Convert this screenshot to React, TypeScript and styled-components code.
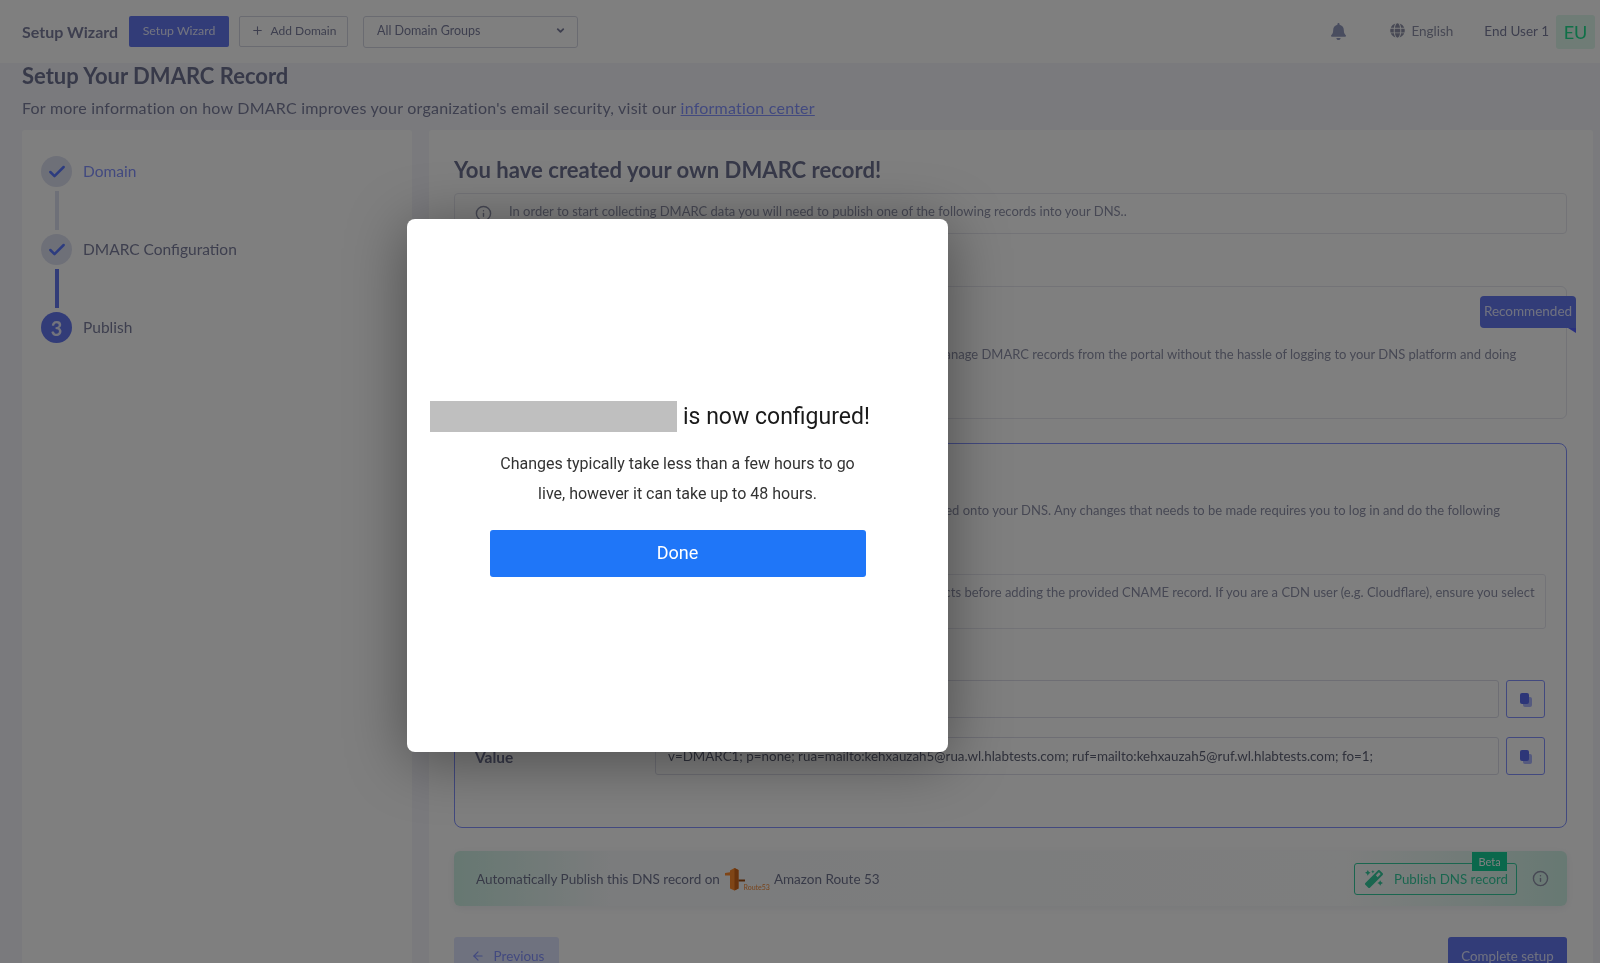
import React from "react";
import styled, { createGlobalStyle } from "styled-components";
import { Check, Info, Plus, ArrowLeft, ChevronDown } from "lucide-react";
import { FaBell, FaGlobe, FaMagic } from "react-icons/fa";

const Global = createGlobalStyle`
  html, body { margin: 0; padding: 0; background: #f4f6fc; }
  * { box-sizing: border-box; }
`;
const INK = "#7c7f9e";
const MUTED = "#8e91a8";
const BRAND = "#8493ff";
const DARK = "#6478f0";
const GREEN = "#35cc9f";

const Page = styled.div`
  position: relative;
  width: 1600px;
  height: 963px;
  overflow: hidden;
  background: #f4f5fa;
  font-family: "Lato", "Liberation Sans", sans-serif;
  color: ${INK};
  filter: blur(0.35px);
`;
const TopBar = styled.header`
  height: 63px;
  background: #fff;
  display: flex;
  align-items: center;
  padding: 0 5px 0 22px;
`;
const Brand = styled.div`
  font-size: 16px;
  font-weight: 700;
  width: 107px;
`;
const PrimaryBtn = styled.div`
  width: 100px;
  height: 31px;
  padding-bottom: 2px;
  border-radius: 2px;
  background: ${DARK};
  color: #e6e9ff;
  font-size: 12.3px;
  display: flex;
  align-items: center;
  justify-content: center;
`;
const OutlineBtn = styled.div`
  margin-left: 10px;
  width: 109px;
  height: 31px;
  padding-bottom: 2px;
  border: 1px solid #d5d7e2;
  border-radius: 2px;
  font-size: 12px;
  display: flex;
  align-items: center;
  justify-content: center;
  gap: 7px;
`;
const SelectBox = styled.div`
  margin-left: 15px;
  width: 215px;
  height: 32px;
  padding: 0 11px 2px 13px;
  border: 1px solid #d5d7e2;
  border-radius: 3px;
  font-size: 12.5px;
  display: flex;
  align-items: center;
  justify-content: space-between;
`;
const Spacer = styled.div`
  flex: 1;
`;
const BellWrap = styled.div`
  color: #939abf;
  display: flex;
  margin-right: 43px;
`;
const Lang = styled.div`
  display: flex;
  align-items: center;
  gap: 6px;
  font-size: 13.5px;
  padding-bottom: 2px;
  color: ${MUTED};
  margin-right: 31px;
`;
const UserName = styled.div`
  font-size: 13.5px;
  padding-bottom: 2px;
  margin-right: 7px;
`;
const Avatar = styled.div`
  width: 39px;
  height: 34px;
  border-radius: 3px;
  background: #def8ec;
  color: #20e090;
  font-size: 18px;
  display: flex;
  align-items: center;
  justify-content: center;
`;
const Main = styled.main`
  padding: 0 7px 0 22px;
`;
const PageTitle = styled.h1`
  margin: 0;
  height: 27px;
  line-height: 25px;
  font-size: 22px;
  font-weight: 700;
  color: #6f7392;
`;
const PageSub = styled.p`
  margin: 6px 0 0;
  height: 24px;
  line-height: 24px;
  font-size: 16px;
  letter-spacing: 0.22px;
`;
const InfoLink = styled.a`
  color: ${BRAND};
  text-decoration: underline;
`;
const Columns = styled.div`
  margin-top: 10px;
  display: grid;
  grid-template-columns: 390px 1164px;
  gap: 17px;
`;
const SidePanel = styled.aside`
  background: #fff;
  height: 840px;
  border-radius: 3px;
  padding: 26px 19px;
`;
const Step = styled.div`
  display: flex;
  align-items: center;
  gap: 11px;
`;
const StepDot = styled.div<{ $solid?: boolean }>`
  width: 31px;
  height: 31px;
  border-radius: 50%;
  background: ${(p) => (p.$solid ? DARK : "#dde0f0")};
  color: ${(p) => (p.$solid ? "#e6e8fa" : "#5a78ff")};
  font-size: 20px;
  font-weight: 700;
  display: flex;
  align-items: center;
  justify-content: center;
`;
const StepLabel = styled.div<{ $active?: boolean }>`
  font-size: 15.5px;
  padding-bottom: 2px;
  color: ${(p) => (p.$active ? BRAND : INK)};
`;
const Connector = styled.div<{ $done?: boolean }>`
  width: 4px;
  height: 39px;
  margin: 4px 0 4px 14px;
  background: ${(p) => (p.$done ? DARK : "#dde0f0")};
`;
const Content = styled.section`
  background: #fff;
  height: 840px;
  border-radius: 3px;
  padding: 25px 26px 0 25px;
`;
const ContentTitle = styled.h2`
  margin: 0;
  height: 30px;
  line-height: 30px;
  font-size: 22.1px;
  font-weight: 700;
  color: #6f7392;
`;
const Notice = styled.div`
  margin-top: 8px;
  height: 41px;
  border: 1px solid #e6e7ef;
  border-radius: 4px;
  padding: 9px 20px;
  display: flex;
  gap: 9px;
  font-size: 13px;
  color: ${MUTED};
`;
const NoticeIcon = styled.div`
  display: flex;
  margin-top: 2px;
  width: 25px;
  flex: none;
`;
const Card = styled.div`
  position: relative;
  margin-top: 52px;
  height: 133px;
  border: 1px solid #e6e7ef;
  border-radius: 6px;
  padding: 57px 20px 0;
  font-size: 13px;
  line-height: 20px;
  color: ${MUTED};
`;
const Ribbon = styled.div`
  position: absolute;
  top: 9px;
  right: -10px;
  width: 96px;
  height: 32px;
  padding-bottom: 2px;
  border-radius: 4px 4px 0 4px;
  background: ${DARK};
  color: #dfe3ff;
  font-size: 13.5px;
  display: flex;
  align-items: center;
  justify-content: center;
  &::after {
    content: "";
    position: absolute;
    right: 0;
    top: 32px;
    border-top: 5px solid #5560ff;
    border-right: 8px solid transparent;
    transform: scaleX(-1);
  }
`;
const SelectedCard = styled.div`
  margin-top: 24px;
  height: 385px;
  border: 1px solid ${BRAND};
  border-radius: 8px;
  padding: 56px 20px 0;
  font-size: 13px;
  line-height: 20px;
  color: ${MUTED};
`;
const NoteBox = styled.div`
  margin-top: 34px;
  height: 55px;
  border: 1px solid #e6e7ef;
  border-radius: 3px;
  padding: 7px 8px 7px 13px;
`;
const FieldRow = styled.div<{ $first?: boolean }>`
  margin-top: ${(p) => (p.$first ? "51px" : "19px")};
  display: flex;
  align-items: center;
  height: 38px;
`;
const FieldLabel = styled.div`
  width: 180px;
  font-size: 15.5px;
  font-weight: 700;
  color: #6f7392;
  position: relative;
  top: 1px;
`;
const FieldInput = styled.div`
  width: 844px;
  height: 38px;
  border: 1px solid #dcdde8;
  border-radius: 3px;
  padding: 0 12px;
  font-size: 13.4px;
  line-height: 36px;
  color: #5f6276;
  white-space: nowrap;
`;
const CopyBtn = styled.div`
  margin-left: 7px;
  width: 39px;
  height: 38px;
  border: 1px solid ${BRAND};
  border-radius: 3px;
  display: flex;
  align-items: center;
  justify-content: center;
`;
const PublishBar = styled.div`
  margin-top: 23px;
  height: 55px;
  border-radius: 6px;
  background: linear-gradient(90deg, #cdf0e4 0%, #f6f8fa 14%, #fbfcfc 80%, #cff2e6 100%);
  box-shadow: 0 2px 8px rgba(120, 130, 160, 0.12);
  padding: 0 18px 0 22px;
  display: flex;
  align-items: center;
  font-size: 13.5px;
  color: #70748f;
`;
const LogoWrap = styled.div`
  position: relative;
  width: 46px;
  height: 24px;
  margin: 0 4px;
`;
const LogoText = styled.span`
  position: absolute;
  right: 0;
  bottom: 0;
  font-size: 7px;
  color: #f08a3a;
  line-height: 8px;
`;
const PublishBtn = styled.div`
  position: relative;
  width: 163px;
  height: 32px;
  border: 1px solid ${GREEN};
  border-radius: 3px;
  color: ${GREEN};
  font-size: 13.3px;
  display: flex;
  align-items: center;
  gap: 11px;
  padding-left: 10px;
`;
const Beta = styled.span`
  position: absolute;
  top: -12px;
  right: 9px;
  width: 35px;
  height: 19px;
  background: #14d098;
  color: #fff;
  font-size: 11px;
  display: flex;
  align-items: center;
  justify-content: center;
`;
const BarInfo = styled.div`
  margin-left: 15px;
  display: flex;
  color: ${MUTED};
`;
const Actions = styled.div`
  margin-top: 31px;
  display: flex;
  justify-content: space-between;
`;
const BackBtn = styled.div`
  width: 105px;
  height: 38px;
  padding-left: 2px;
  border-radius: 3px;
  background: #dfe4ff;
  color: ${BRAND};
  font-size: 13.5px;
  display: flex;
  align-items: center;
  justify-content: center;
  gap: 9px;
`;
const FinishBtn = styled.div`
  width: 119px;
  height: 38px;
  border-radius: 3px;
  background: ${DARK};
  color: #dfe3ff;
  font-size: 13.3px;
  display: flex;
  align-items: center;
  justify-content: center;
`;
const Overlay = styled.div`
  position: absolute;
  inset: 0;
  background: rgba(0, 0, 0, 0.5);
  padding: 219px 0 0 407px;
`;
const Modal = styled.div`
  width: 541px;
  height: 533px;
  background: #fff;
  border-radius: 8px;
  box-shadow: 0 8px 60px rgba(0, 0, 0, 0.4);
  font-family: "Roboto", sans-serif;
  padding-top: 182px;
  display: flex;
  flex-direction: column;
  align-items: center;
`;
const ModalHead = styled.div`
  width: 100%;
  display: flex;
  align-items: center;
  padding-left: 23px;
  gap: 6px;
  font-size: 23px;
  color: #1a1a1a;
`;
const HeadText = styled.span`
  padding-bottom: 1px;
`;
const Redacted = styled.div`
  width: 247px;
  height: 31px;
  background: #bfbfbf;
`;
const ModalText = styled.p`
  margin: 17px 0 0;
  width: 380px;
  text-align: center;
  font-size: 16px;
  line-height: 29.5px;
  color: #333;
`;
const DoneBtn = styled.div`
  margin-top: 22px;
  width: 376px;
  height: 47px;
  padding-bottom: 3px;
  border-radius: 3px;
  background: #1f76f8;
  color: #fff;
  font-size: 18px;
  display: flex;
  align-items: center;
  justify-content: center;
`;

const CopyIcon = () => (
  <svg width="14" height="15" viewBox="0 0 14 15">
    <rect x="4" y="5" width="9" height="10" rx="2" fill="#aab4ff" />
    <rect x="1" y="1" width="9" height="11" rx="2" fill="#5a6cf0" />
  </svg>
);
const RouteLogo = () => (
  <svg width="22" height="24" viewBox="0 0 22 24">
    <path d="M6 3.5l4.5-2.5 4 2v18.5l-4 2-4.5-2V8.5H1V6l5-.8z" fill="#ff8a2c" />
    <path d="M10.5 1l4 2v18.5l-4 2z" fill="#d0661a" />
    <path d="M14.5 12.5H21v2h-6.5z" fill="#a04c10" />
  </svg>
);

export default function App() {
  return (
    <Page>
      <Global />
      <TopBar>
        <Brand>Setup Wizard</Brand>
        <PrimaryBtn>Setup Wizard</PrimaryBtn>
        <OutlineBtn><Plus size={13} />Add Domain</OutlineBtn>
        <SelectBox>All Domain Groups<ChevronDown size={11} strokeWidth={4} /></SelectBox>
        <Spacer />
        <BellWrap><FaBell size={17} /></BellWrap>
        <Lang><FaGlobe size={15} />English</Lang>
        <UserName>End User 1</UserName>
        <Avatar>EU</Avatar>
      </TopBar>
      <Main>
        <PageTitle>Setup Your DMARC Record</PageTitle>
        <PageSub>
          For more information on how DMARC improves your organization's email security, visit our{" "}
          <InfoLink>information center</InfoLink>
        </PageSub>
        <Columns>
          <SidePanel>
            <Step>
              <StepDot><Check size={20} strokeWidth={3} /></StepDot>
              <StepLabel $active>Domain</StepLabel>
            </Step>
            <Connector />
            <Step>
              <StepDot><Check size={20} strokeWidth={3} /></StepDot>
              <StepLabel>DMARC Configuration</StepLabel>
            </Step>
            <Connector $done />
            <Step>
              <StepDot $solid>3</StepDot>
              <StepLabel>Publish</StepLabel>
            </Step>
          </SidePanel>
          <Content>
            <ContentTitle>You have created your own DMARC record!</ContentTitle>
            <Notice>
              <NoticeIcon><Info size={17} /></NoticeIcon>
              In order to start collecting DMARC data you will need to publish one of the following records into your DNS..
            </Notice>
            <Card>
              <Ribbon>Recommended</Ribbon>
              Let us host your DMARC records for you so you could securely view, update and manage DMARC records from the portal without the hassle of logging to your DNS platform and doing manual updates.
            </Card>
            <SelectedCard>
              With the manual setup, the DMARC record will first be generated and then published onto your DNS. Any changes that needs to be made requires you to log in and do the following procedures.
              <NoteBox>
                Please make sure that your domain has no existing DMARC records or any conflicts before adding the provided CNAME record. If you are a CDN user (e.g. Cloudflare), ensure you select DNS only.
              </NoteBox>
              <FieldRow $first>
                <FieldLabel>Name</FieldLabel>
                <FieldInput />
                <CopyBtn><CopyIcon /></CopyBtn>
              </FieldRow>
              <FieldRow>
                <FieldLabel>Value</FieldLabel>
                <FieldInput>v=DMARC1; p=none; rua=mailto:kehxauzah5@rua.wl.hlabtests.com; ruf=mailto:kehxauzah5@ruf.wl.hlabtests.com; fo=1;</FieldInput>
                <CopyBtn><CopyIcon /></CopyBtn>
              </FieldRow>
            </SelectedCard>
            <PublishBar>
              Automatically Publish this DNS record on
              <LogoWrap><RouteLogo /><LogoText>Route53</LogoText></LogoWrap>
              Amazon Route 53
              <Spacer />
              <PublishBtn><FaMagic size={18} />Publish DNS record<Beta>Beta</Beta></PublishBtn>
              <BarInfo><Info size={17} /></BarInfo>
            </PublishBar>
            <Actions>
              <BackBtn><ArrowLeft size={14} />Previous</BackBtn>
              <FinishBtn>Complete setup</FinishBtn>
            </Actions>
          </Content>
        </Columns>
      </Main>
      <Overlay>
        <Modal>
          <ModalHead><Redacted /><HeadText>is now configured!</HeadText></ModalHead>
          <ModalText>Changes typically take less than a few hours to go live, however it can take up to 48 hours.</ModalText>
          <DoneBtn>Done</DoneBtn>
        </Modal>
      </Overlay>
    </Page>
  );
}
